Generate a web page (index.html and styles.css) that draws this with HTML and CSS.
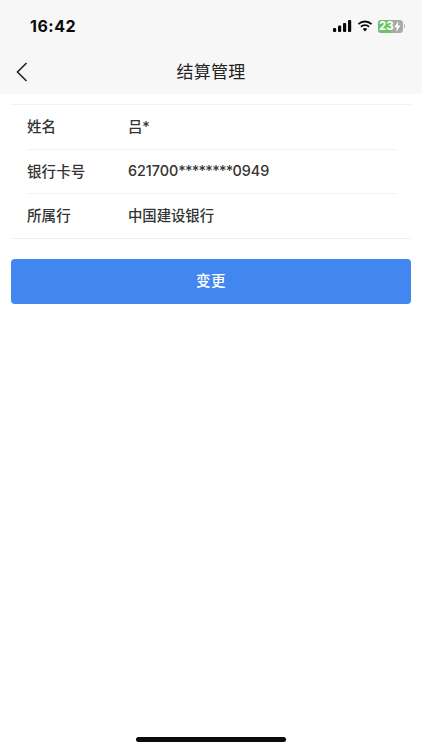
FILE: index.html
```html
<!DOCTYPE html>
<html lang="zh-CN">
<head>
<meta charset="utf-8">
<title>结算管理</title>
<link rel="stylesheet" href="styles.css">
</head>
<body>
<div class="page">
  <header class="top">
    <div class="status">
      <span class="time">16:42</span>
      <div class="indicators">
        <svg class="signal" width="19" height="12" viewBox="0 0 19 12"><rect x="0" y="8" width="3.2" height="4" rx="1" /><rect x="5" y="5.5" width="3.2" height="6.5" rx="1" /><rect x="10" y="3" width="3.2" height="9" rx="1" /><rect x="15" y="0" width="3.2" height="12" rx="1" /></svg>
        <svg class="wifi" width="16" height="12" viewBox="0 0 16 12"><path d="M8 2.4c2.3 0 4.4.9 6 2.4l1.2-1.3A10.6 10.6 0 0 0 8 .6 10.6 10.6 0 0 0 .8 3.5L2 4.8a8.700 8.700 0 0 1 6-2.400z"/><path d="M8 6.100c1.300 0 2.500.5 3.400 1.300l1.300-1.300A6.900 6.900 0 0 0 8 4.200a6.900 6.900 0 0 0-4.700 1.900l1.300 1.300A5 5 0 0 1 8 6.100z"/><path d="M8 8c-.9 0-1.700.3-2.200.9L8 11.400l2.200-2.500C9.700 8.300 8.900 8 8 8z"/></svg>
        <div class="battery"><span class="level"></span><span class="pct">23</span><svg class="bolt" width="7" height="11" viewBox="0 0 7 11"><path d="M4.300 0 .4 6.200h2.400L2.300 11l4.200-6.500H4z"/></svg></div>
        <span class="cap"></span>
      </div>
    </div>
    <nav class="nav">
      <svg class="back" width="12" height="20" viewBox="0 0 12 20"><path d="M10.500 1 1.500 10l9 9"/></svg>
      <h1 class="title">结算管理</h1>
    </nav>
  </header>
  <main class="main">
    <section class="list">
      <div class="row"><span class="label">姓名</span><span class="value">吕*</span></div>
      <div class="row"><span class="label">银行卡号</span><span class="value">621700<span class="mask">********</span>0949</span></div>
      <div class="row"><span class="label">所属行</span><span class="value">中国建设银行</span></div>
    </section>
    <button class="change" type="button">变更</button>
  </main>
  <div class="home"></div>
</div>
</body>
</html>
```
FILE: styles.css
```css
* { box-sizing: border-box; margin: 0; padding: 0; }
html, body { width: 422px; height: 750px; overflow: hidden; background: #fff; }
body { font-family: "Noto Sans CJK SC", "Liberation Sans", sans-serif; }
.page { width: 422px; height: 750px; display: flex; flex-direction: column; }
.top { height: 94px; background: #f7f7f7; flex: none; }
.status { height: 44px; padding: 8px 17px 0 30px; display: flex; justify-content: space-between; align-items: center; }
.time { font-family: Inter, "Liberation Sans", sans-serif; font-weight: 700; font-size: 16px; letter-spacing: .5px; color: #0a0a0a; }
.indicators { display: flex; align-items: center; }
.signal { fill: #0a0a0a; margin-right: 5px; }
.wifi { fill: #0a0a0a; margin-right: 5px; }
.battery { position: relative; width: 25px; height: 13px; border-radius: 3.500px; background: #a9a9a9; overflow: hidden; display: flex; align-items: center; }
.level { position: absolute; left: 0; top: 0; bottom: 0; width: 13px; background: #6cc264; }
.pct { position: relative; font-family: Inter, "Liberation Sans", sans-serif; font-weight: 700; font-size: 11.500px; line-height: 13px; color: #fff; padding-left: 1.500px; }
.bolt { position: relative; fill: #fff; margin-left: .5px; }
.cap { width: 1.500px; height: 4px; margin-left: 1px; background: #b5b5b5; border-radius: 0 1px 1px 0; }
.nav { height: 50px; position: relative; display: flex; align-items: center; justify-content: center; padding-top: 3px; }
.back { position: absolute; left: 16px; top: 18px; fill: none; stroke: #222; stroke-width: 1.600; }
.title { font-size: 17px; font-weight: 400; color: #222; letter-spacing: .3px; }
.main { flex: 1; padding: 10px 11px 0; }
.list { border-top: 1px solid #f2f2f2; border-bottom: 1px solid #f0f0f0; }
.row { height: 44.200px; margin-left: 16px; margin-right: 14px; padding-bottom: 3px; display: flex; align-items: center; font-size: 14.500px; font-weight: 500; color: #333; }
.row + .row { border-top: 1px solid #f2f2f2; }
.label { width: 101px; flex: none; letter-spacing: .1px; }
.value { font-size: 14.400px; letter-spacing: -.05px; font-family: Inter, "Noto Sans CJK SC", sans-serif; }
.mask { letter-spacing: -.7px; }
.change { display: block; width: 400px; height: 45px; margin-top: 20px; border: 0; border-radius: 4px; background: #4287f0; color: #fff; font-family: inherit; font-size: 14.500px; font-weight: 500; letter-spacing: .4px; padding-bottom: 3px; }
.home { position: absolute; left: 136px; top: 737px; width: 150px; height: 4.500px; border-radius: 3px; background: #0a0a0a; }
```
